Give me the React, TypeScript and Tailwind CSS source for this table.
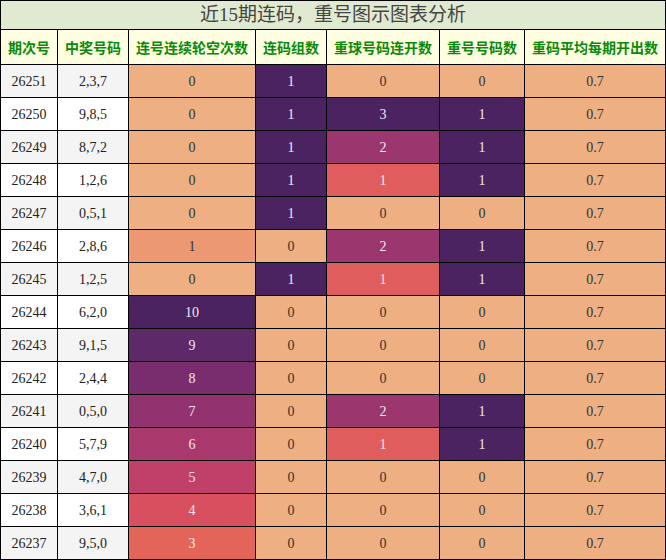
import React from "react";

type Row = [string, string, number, number, number, number, string];

const rows: Row[] = [
  ["26251", "2,3,7", 0, 1, 0, 0, "0.7"],
  ["26250", "9,8,5", 0, 1, 3, 1, "0.7"],
  ["26249", "8,7,2", 0, 1, 2, 1, "0.7"],
  ["26248", "1,2,6", 0, 1, 1, 1, "0.7"],
  ["26247", "0,5,1", 0, 1, 0, 0, "0.7"],
  ["26246", "2,8,6", 1, 0, 2, 1, "0.7"],
  ["26245", "1,2,5", 0, 1, 1, 1, "0.7"],
  ["26244", "6,2,0", 10, 0, 0, 0, "0.7"],
  ["26243", "9,1,5", 9, 0, 0, 0, "0.7"],
  ["26242", "2,4,4", 8, 0, 0, 0, "0.7"],
  ["26241", "0,5,0", 7, 0, 2, 1, "0.7"],
  ["26240", "5,7,9", 6, 0, 1, 1, "0.7"],
  ["26239", "4,7,0", 5, 0, 0, 0, "0.7"],
  ["26238", "3,6,1", 4, 0, 0, 0, "0.7"],
  ["26237", "9,5,0", 3, 0, 0, 0, "0.7"],
];

const PEACH = "bg-[#eeb082] text-[#333]";
const DARK = "bg-[#4a2360] text-[#f2eaee]";

const col3: Record<number, string> = {
  10: "bg-[#4a2360] text-[#f2eaee]",
  9: "bg-[#5e2969] text-[#f2eaee]",
  8: "bg-[#792d6f] text-[#f2eaee]",
  7: "bg-[#92336f] text-[#f2eaee]",
  6: "bg-[#a9396d] text-[#f2eaee]",
  5: "bg-[#c1406a] text-[#f2eaee]",
  4: "bg-[#d8505f] text-[#f2eaee]",
  3: "bg-[#e3655a] text-[#f2eaee]",
  1: "bg-[#eb9873] text-[#333]",
  0: PEACH,
};
const col4: Record<number, string> = { 1: DARK, 0: PEACH };
const col5: Record<number, string> = {
  3: DARK,
  2: "bg-[#9b366f] text-[#f2eaee]",
  1: "bg-[#e05d5e] text-[#f2eaee]",
  0: PEACH,
};
const col6: Record<number, string> = { 1: DARK, 0: PEACH };

function Cell({ v, cls }: { v: number | string; cls: string }) {
  return <div className={`flex items-center justify-center ${cls}`}>{v}</div>;
}

const headers = ["期次号", "中奖号码", "连号连续轮空次数", "连码组数", "重球号码连开数", "重号号码数", "重码平均每期开出数"];

export default function App() {
  return (
    <div className="w-[666px] h-[560px] bg-black p-px grid gap-px grid-cols-[56px_70px_126px_70px_112px_84px_140px] grid-rows-[28px_34px_repeat(15,32px)] text-[14px] font-['Liberation_Serif','Noto_Sans_CJK_SC',serif]">
      <div className="col-span-7 bg-[#e0ead1] flex items-center justify-center text-[19px] text-[#444]">
        近15期连码，重号图示图表分析
      </div>
      {headers.map((h) => (
        <div
          key={h}
          className="bg-[#fffee0] flex items-center justify-center font-bold text-[#0a8a0a] text-[14px] font-['Noto_Sans_CJK_SC',sans-serif]"
        >
          {h}
        </div>
      ))}
      {rows.map((r, i) => {
        const bg = i % 2 === 0 ? "bg-[#f4f4f4] text-[#222]" : "bg-white text-[#222]";
        return (
          <React.Fragment key={r[0]}>
            <Cell v={r[0]} cls={bg} />
            <Cell v={r[1]} cls={bg} />
            <Cell v={r[2]} cls={col3[r[2]]} />
            <Cell v={r[3]} cls={col4[r[3]]} />
            <Cell v={r[4]} cls={col5[r[4]]} />
            <Cell v={r[5]} cls={col6[r[5]]} />
            <Cell v={r[6]} cls={PEACH} />
          </React.Fragment>
        );
      })}
    </div>
  );
}
